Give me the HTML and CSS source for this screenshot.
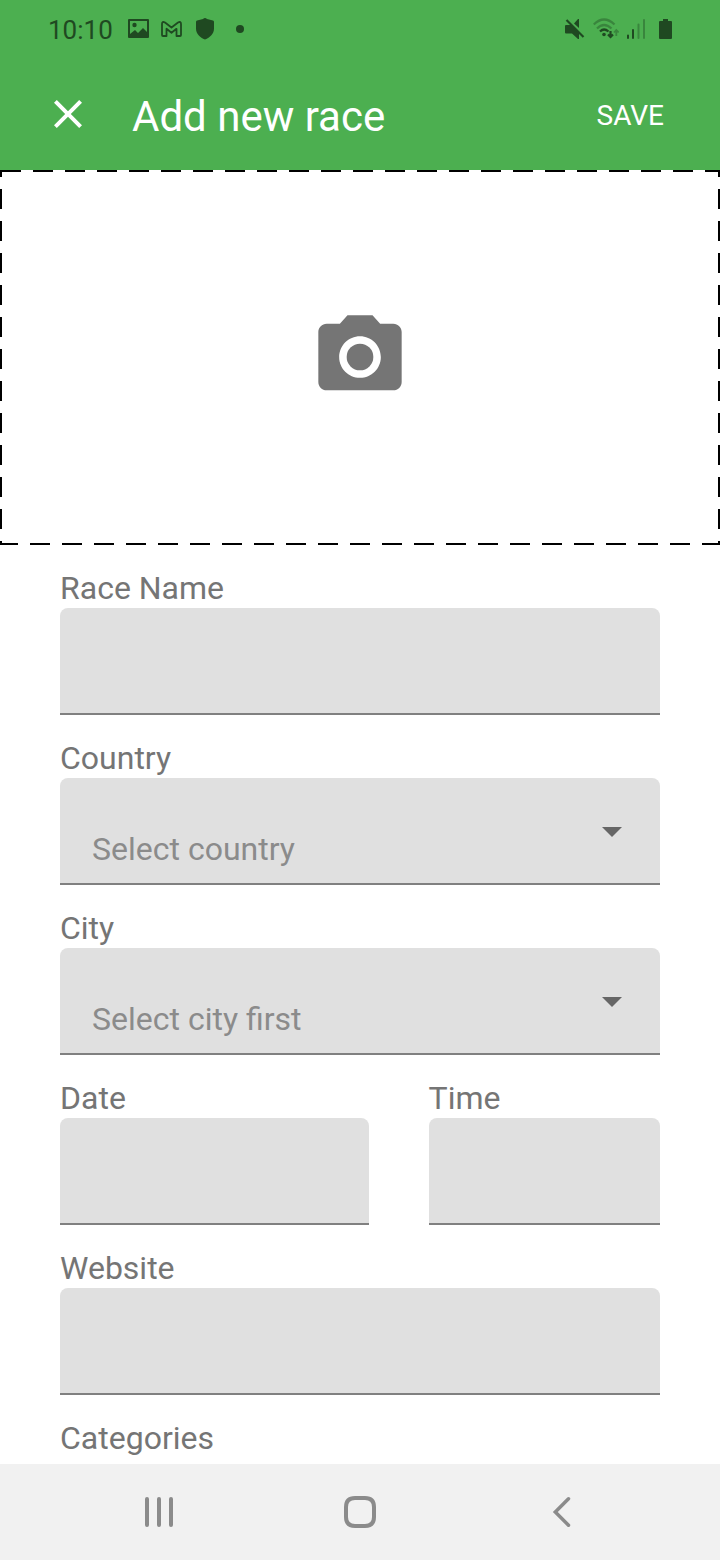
FILE: index.html
```html
<!DOCTYPE html>
<html lang="en">
<head>
<meta charset="utf-8">
<meta name="viewport" content="width=device-width, initial-scale=1">
<title>Add new race</title>
<link rel="stylesheet" href="styles.css">
</head>
<body>
<div class="status-bar">
  <div class="status-left">
    <span class="clock">10:10</span>
    <svg class="picture-icon" width="21" height="20" viewBox="0 0 21 20" fill="currentColor" aria-hidden="true">
      <path fill-rule="evenodd" d="M1 0h19a1 1 0 0 1 1 1v17a1 1 0 0 1-1 1H1a1 1 0 0 1-1-1V1a1 1 0 0 1 1-1zM2 2v13l5-4 3 3 5-5 4 4V2z"/>
      <circle cx="6.500" cy="6" r="2.200"/>
    </svg>
    <svg width="21" height="16" viewBox="0 0 21 16" fill="none" stroke="currentColor" stroke-width="1.800" stroke-linejoin="round" aria-hidden="true">
      <path d="M1 3Q1 0 4 1.500L10.500 6.500 17 1.500Q20 0 20 3V14q0 1-1 1H15.500V7.800L10.500 11.800 5.500 7.800V15H2Q1 15 1 14z"/>
    </svg>
    <svg class="shield-icon" width="18" height="22" viewBox="0 0 18 22" fill="currentColor" aria-hidden="true">
      <path d="M9 0q1 0 2 1l6 1.500q1 .3 1 1.500v6.500C18 16 14 19.500 9 21.500 4 19.500 0 16 0 10.500V4q0-1.200 1-1.500L7 1q1-1 2-1z"/>
    </svg>
    <span class="status-dot"></span>
  </div>
  <div class="status-right">
    <svg width="20" height="22" viewBox="0 0 20 22" fill="currentColor" aria-hidden="true">
      <path d="M1 7h5l8 7.500V21h-1l-6-5.500H1q-1 0-1-1V8q0-1 1-1zM9 5.500L13 1h1v9z"/>
      <path d="M1.500 2l17 17" fill="none" stroke="currentColor" stroke-width="2.200"/>
    </svg>
    <svg width="26" height="22" viewBox="0 0 26 22" fill="none" stroke="currentColor" stroke-width="2.200" aria-hidden="true">
      <g opacity=".4"><path d="M.8 6.500Q11 -3.500 21.500 6.500M4 10.500Q11 3.500 18.500 10.500"/><path stroke-width="1.800" d="M23.300 18v-5.500M21 14.500l2.300-2.500 2.300 2.500"/></g>
      <path d="M7 13.500q4-4 8.500 0M17.500 13v5.500M15 16.500l2.500 2.500 2.500-2.500"/>
      <circle cx="11" cy="16.500" r="1.800" fill="currentColor" stroke="none"/>
    </svg>
    <svg width="18" height="22" viewBox="0 0 18 22" fill="none" stroke="currentColor" stroke-width="2" stroke-linecap="round" aria-hidden="true">
      <path d="M1 17.500v2.500M6 12v8"/><path opacity=".4" d="M11.500 6.500V20M17 2v18"/>
    </svg>
    <svg class="battery-icon" width="13" height="22" viewBox="0 0 13 22" fill="currentColor" aria-hidden="true">
      <path d="M4 1h5v2h3q1 0 1 1v16q0 1-1 1H1q-1 0-1-1V4q0-1 1-1h3z"/>
    </svg>
  </div>
</div>
<header class="app-bar">
  <button class="close-button" type="button" aria-label="Close">
    <svg width="48" height="48" viewBox="0 0 24 24" fill="currentColor" aria-hidden="true"><path d="M19 6.410L17.590 5 12 10.590 6.410 5 5 6.410 10.590 12 5 17.590 6.410 19 12 13.410 17.590 19 19 17.590 13.410 12z"/></svg>
  </button>
  <h1 class="title">Add new race</h1>
  <button class="save-button" type="submit" form="race-form">SAVE</button>
</header>
<main class="content">
  <button class="photo-picker" type="button" aria-label="Add photo">
    <svg class="photo-outline" aria-hidden="true"><rect class="photo-dashes"/></svg>
    <svg width="100" height="100" viewBox="0 0 24 24" fill="currentColor" aria-hidden="true"><circle cx="12" cy="12" r="3.200"/><path d="M9 2L7.170 4H4c-1.100 0-2 .9-2 2v12c0 1.100.9 2 2 2h16c1.100 0 2-.9 2-2V6c0-1.100-.9-2-2-2h-3.170L15 2H9zm3 15c-2.760 0-5-2.240-5-5s2.240-5 5-5 5 2.240 5 5-2.240 5-5 5z"/></svg>
  </button>
  <form class="race-form" id="race-form">
    <div class="field">
      <label class="label" for="race-name">Race Name</label>
      <input class="control" id="race-name" type="text">
    </div>
    <div class="field">
      <label class="label" for="country">Country</label>
      <div class="select-box">
        <select class="control select" id="country"><option>Select country</option></select>
        <svg class="caret" width="20" height="10" viewBox="0 0 20 10" fill="currentColor" aria-hidden="true"><path d="M0 0h20L10 10z"/></svg>
      </div>
    </div>
    <div class="field">
      <label class="label" for="city">City</label>
      <div class="select-box">
        <select class="control select" id="city"><option>Select city first</option></select>
        <svg class="caret" width="20" height="10" viewBox="0 0 20 10" fill="currentColor" aria-hidden="true"><path d="M0 0h20L10 10z"/></svg>
      </div>
    </div>
    <div class="field-row">
      <div class="field">
        <label class="label" for="date">Date</label>
        <input class="control" id="date" type="text">
      </div>
      <div class="field">
        <label class="label" for="time">Time</label>
        <input class="control" id="time" type="text">
      </div>
    </div>
    <div class="field">
      <label class="label" for="website">Website</label>
      <input class="control" id="website" type="url">
    </div>
    <h2 class="label">Categories</h2>
  </form>
</main>
<nav class="nav-bar" aria-label="System">
  <button class="nav-button" type="button" aria-label="Recent apps">
    <svg width="32" height="32" viewBox="0 0 32 32" fill="none" stroke="currentColor" stroke-width="4" stroke-linecap="round"><path d="M2 3v26M14 3v26M26 3v26" transform="translate(2)"/></svg>
  </button>
  <button class="nav-button" type="button" aria-label="Home">
    <svg width="32" height="32" viewBox="0 0 32 32" fill="none" stroke="currentColor" stroke-width="4"><path d="M11 2h10q9 0 9 9v10q0 9-9 9H11q-9 0-9-9V11q0-9 9-9z"/></svg>
  </button>
  <button class="nav-button" type="button" aria-label="Back">
    <svg width="32" height="32" viewBox="0 0 32 32" fill="none" stroke="currentColor" stroke-width="3.500" stroke-linecap="round"><path d="M23.500 2.800L10.300 16 23.500 29.200"/></svg>
  </button>
</nav>
</body>
</html>
```

FILE: styles.css
```css
* {
  box-sizing: border-box;
}

body {
  display: flex;
  flex-direction: column;
  min-height: 100vh;
  margin: 0;
  background: #fff;
  font-family: Roboto, sans-serif;
  font-size: 32px;
}

button,
input,
select {
  margin: 0;
  padding: 0;
  border: 0;
  background: none;
  color: inherit;
  font: inherit;
}

svg {
  display: block;
  flex: none;
}

.status-bar {
  display: flex;
  justify-content: space-between;
  height: 60px;
  padding: 0 48px 2px;
  background: #4caf50;
  color: #1f4921;
}

.status-left,
.status-right {
  display: flex;
  align-items: center;
}

.status-left {
  gap: 12px;
}

.status-right {
  gap: 8px;
}

.clock {
  padding-top: 2px;
  font-size: 26px;
}

.picture-icon {
  margin-left: 3px;
}

.shield-icon {
  margin-left: 2px;
}

.status-dot {
  width: 8px;
  height: 8px;
  margin-left: 10px;
  border-radius: 50%;
  background: currentColor;
}

.battery-icon {
  margin-left: 6px;
}

.app-bar {
  display: flex;
  align-items: center;
  height: 110px;
  padding: 0 56px 0 44px;
  background: #4caf50;
  color: #fff;
}

.close-button {
  padding-bottom: 2px;
}

.title {
  flex: 1;
  margin: 0 0 0 40px;
  padding-top: 2px;
  font-size: 42px;
  font-weight: 400;
}

.save-button {
  font-size: 28px;
}

.photo-picker {
  position: relative;
  display: flex;
  align-items: center;
  justify-content: center;
  width: 100%;
  height: 375px;
  padding-bottom: 2px;
  color: #757575;
}

.photo-outline {
  position: absolute;
  inset: 0;
  width: 100%;
  height: 100%;
}

.photo-dashes {
  x: 1px;
  y: 1px;
  width: calc(100% - 2px);
  height: calc(100% - 2px);
  fill: none;
  stroke: #000;
  stroke-width: 2px;
  stroke-dasharray: 20px 12px;
}

.race-form {
  display: flex;
  flex-direction: column;
  gap: 23px;
  padding: 23px 60px 6px;
}

.field-row {
  display: grid;
  grid-template-columns: 4fr 3fr;
  gap: 60px;
}

.label {
  display: block;
  margin: 0;
  color: #757575;
  font-size: 32px;
  font-weight: 400;
  line-height: 40px;
}

.control {
  display: block;
  width: 100%;
  height: 107px;
  padding: 36px 32px 0;
  border-bottom: 2px solid #808080;
  border-radius: 8px 8px 0 0;
  background: #e0e0e0;
}

.select-box {
  display: flex;
  position: relative;
}

.select {
  appearance: none;
  color: #8b8b8b;
}

.caret {
  position: absolute;
  top: 49px;
  right: 38px;
  color: #666;
  pointer-events: none;
}

.nav-bar {
  display: grid;
  grid-template-columns: repeat(3, 1fr);
  height: 96px;
  margin-top: auto;
  padding: 0 58px;
  background: #f1f1f1;
  color: #8b8b8b;
}

.nav-button {
  display: flex;
  align-items: center;
  justify-content: center;
}
```
